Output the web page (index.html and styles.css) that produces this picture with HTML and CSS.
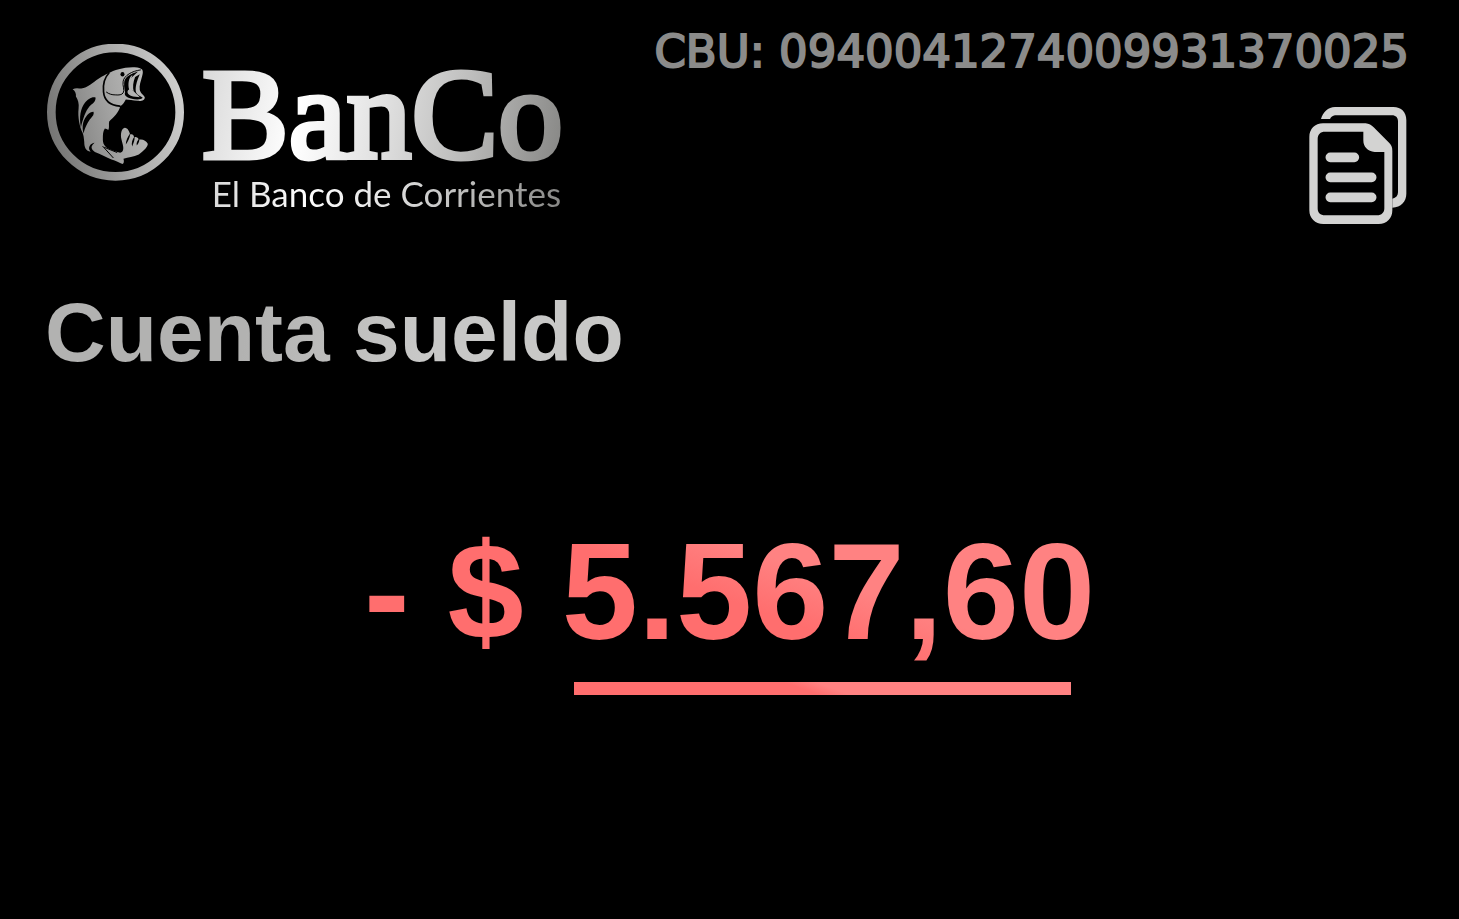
FILE: index.html
```html
<!DOCTYPE html>
<html lang="es">
<head>
<meta charset="utf-8">
<meta name="viewport" content="width=device-width, initial-scale=1">
<title>BanCo</title>
<link rel="stylesheet" href="styles.css">
</head>
<body>
<header class="top">
  <div class="brand">
    <svg class="emblem" viewBox="20 20 412 412" aria-hidden="true">
      <defs>
        <linearGradient id="silver" gradientUnits="userSpaceOnUse" x1="20" y1="270" x2="432" y2="170">
          <stop offset="0" stop-color="#747473"/>
          <stop offset="0.5" stop-color="#a6a6a5"/>
          <stop offset="1" stop-color="#d0d0cf"/>
        </linearGradient>
      </defs>
      <circle cx="226" cy="225" r="193" fill="none" stroke="url(#silver)" stroke-width="26"/>
      <path fill="url(#silver)" d="M97 156C106 151 115 153 123 154C143 152 157 136 176 124C187 117 197 112 204 109C222 98 247 91 278 90C293 89 302 92 306 97C309 102 309 108 306 117C302 133 297 144 299 158C302 170 312 173 314 180C315 188 306 192 294 191C278 190 266 187 257 187C251 199 246 204 240 207C236 227 220 239 207 253C205 261 208 268 205 278C200 276 198 275 194 274C188 283 188 293 188 303C187 320 193 330 207 336C219 342 229 345 240 347L245 345C254 336 247 321 244 307C240 291 244 274 254 272C263 273 267 282 270 292C276 290 281 292 282 301C288 298 294 302 296 308C307 305 318 310 323 320C324 328 312 341 296 352C280 360 264 360 250 365C252 372 252 379 247 381C238 377 227 370 214 367C199 361 181 352 164 345C151 335 151 327 163 317C151 319 145 328 147 337L151 344C137 342 132 332 132 315C131 302 130 295 127 287C118 270 112 239 115 214C117 199 113 188 107 178C108 168 104 160 97 156Z"/>
      <path fill="none" stroke="#000" stroke-width="5" stroke-linecap="round" d="M206 108C192 122 188 143 190 164C192 187 208 204 239 207"/>
      <path fill="none" stroke="#000" stroke-width="3" stroke-linecap="round" d="M199 165C207 171 216 173 225 173C237 174 245 173 249 167C255 160 246 145 249 132C252 115 276 101 301 98M188 328L219 362M193 331L230 346"/>
      <path fill="#000" d="M294 103C270 110 252 120 252 139C251 149 254 158 255 165C251 174 259 180 272 184C287 188 303 188 308 182C301 176 291 174 288 166C284 154 289 134 299 111L285 119C279 134 277 150 281 164C270 155 266 142 272 123Z"/>
      <path fill="url(#silver)" d="M277 113C265 120 263 141 267 157C259 161 261 171 272 176C281 180 292 179 299 180C291 172 284 165 277 160C271 147 270 128 277 113Z"/>
      <ellipse cx="247" cy="111" rx="6" ry="7" fill="#000"/>
      <path fill="#000" d="M166 181C156 177 142 186 134 197C121 214 116 240 122 270C128 245 136 221 148 207C157 199 167 194 166 181ZM160 224C147 224 135 238 129 256C126 268 127 280 130 289C134 271 143 253 152 243C158 237 162 232 160 224ZM270 289C263 299 257 311 257 322C264 312 270 302 270 289ZM283 298C277 307 273 318 276 328C280 317 285 309 283 298ZM297 305C292 311 288 317 290 325C295 319 299 313 297 305Z"/>
    </svg>
    <div class="wordmark">
      <span class="name">BanCo</span>
      <span class="tagline">El Banco de Corrientes</span>
    </div>
  </div>
  <div class="account">
    <p class="cbu">CBU: 0940041274009931370025</p>
    <button class="copy" type="button" aria-label="Copiar CBU">
      <svg viewBox="42 36 292 351" aria-hidden="true">
        <path fill="currentColor" d="M77 72C83 51 98 36 119 36H294C318 36 333 51 333 76V296C333 320 317 336 291 338V311C302 309 308 302 308 292V79C308 68 301 61 290 61H119C112 62 107 66 104 72Z"/>
        <path fill="currentColor" fill-rule="evenodd" d="M83 85H211C221 86 228 90 235 97L279 141C288 149 291 156 291 168V346C291 370 275 387 250 387H84C59 387 42 370 42 346V126C42 102 59 85 83 85ZM89 110C75 110 67 118 67 132V340C67 354 75 361 89 361H245C259 361 267 353 267 340V171H238C217 169 204 156 204 136V110Z"/>
        <path fill="none" stroke="currentColor" stroke-width="29" stroke-linecap="round" d="M105 187H177M105 247H229M105 307H229"/>
      </svg>
    </button>
  </div>
</header>
<main>
  <h1 class="title">Cuenta sueldo</h1>
  <div class="balance">
    <p class="amount">- $ 5.567,60</p>
    <div class="rule"></div>
  </div>
</main>
</body>
</html>
```
FILE: styles.css
```css
* {
  box-sizing: border-box;
}

body {
  margin: 0;
  background: #000;
  font-family: "Liberation Sans", Arial, sans-serif;
}

p,
h1 {
  margin: 0;
}

.top {
  display: flex;
  justify-content: space-between;
  align-items: flex-start;
  padding: 28px 50px 0 47px;
}

.brand {
  display: flex;
  gap: 18px;
  padding-top: 16px;
}

.emblem {
  width: 137px;
  height: 137px;
}

.wordmark {
  display: flex;
  flex-direction: column;
  padding-top: 10px;
}

.name,
.tagline {
  color: transparent;
  background: linear-gradient(100deg, #d8d8d8 0%, #fff 28%, #e4e4e4 48%, #bdbdbc 72%, #858583 100%);
  -webkit-background-clip: text;
  background-clip: text;
  white-space: nowrap;
}

.name {
  font-family: "Liberation Serif", "Times New Roman", serif;
  font-size: 130px;
  line-height: 120px;
  -webkit-text-stroke: 5px transparent;
}

.tagline {
  align-self: flex-end;
  padding-right: 2px;
  font-family: Lato, sans-serif;
  font-size: 35px;
  line-height: 38px;
}

.account {
  display: flex;
  flex-direction: column;
  align-items: flex-end;
  gap: 31px;
}

.cbu {
  color: #8b8b8a;
  font-family: "DejaVu Sans", sans-serif;
  font-size: 45px;
  line-height: 48px;
  -webkit-text-stroke: 2px #8b8b8a;
}

.copy {
  width: 100px;
  padding: 0;
  border: 0;
  background: none;
  color: #d3d3d2;
  cursor: pointer;
}

.copy svg {
  display: block;
  width: 98px;
  height: 117px;
}

.title {
  width: fit-content;
  margin: 60px 0 0 45px;
  font-size: 84px;
  font-weight: 700;
  line-height: 96px;
  color: transparent;
  background: linear-gradient(100deg, #b2b2b1 35%, #c8c8c7 65%);
  -webkit-background-clip: text;
  background-clip: text;
}

.balance {
  display: flex;
  flex-direction: column;
  align-items: flex-end;
  width: fit-content;
  margin: 136px auto 0;
}

.amount {
  font-size: 137px;
  font-weight: 700;
  line-height: 152px;
  white-space: nowrap;
  color: transparent;
  background: linear-gradient(20deg, #ff6e6e 48%, #ff8282 62%);
  -webkit-background-clip: text;
  background-clip: text;
}

.rule {
  width: 68%;
  height: 13px;
  margin: 14px 24px 0 0;
  background: linear-gradient(20deg, #ff6e6e 46%, #ff8282 52%);
}
```
